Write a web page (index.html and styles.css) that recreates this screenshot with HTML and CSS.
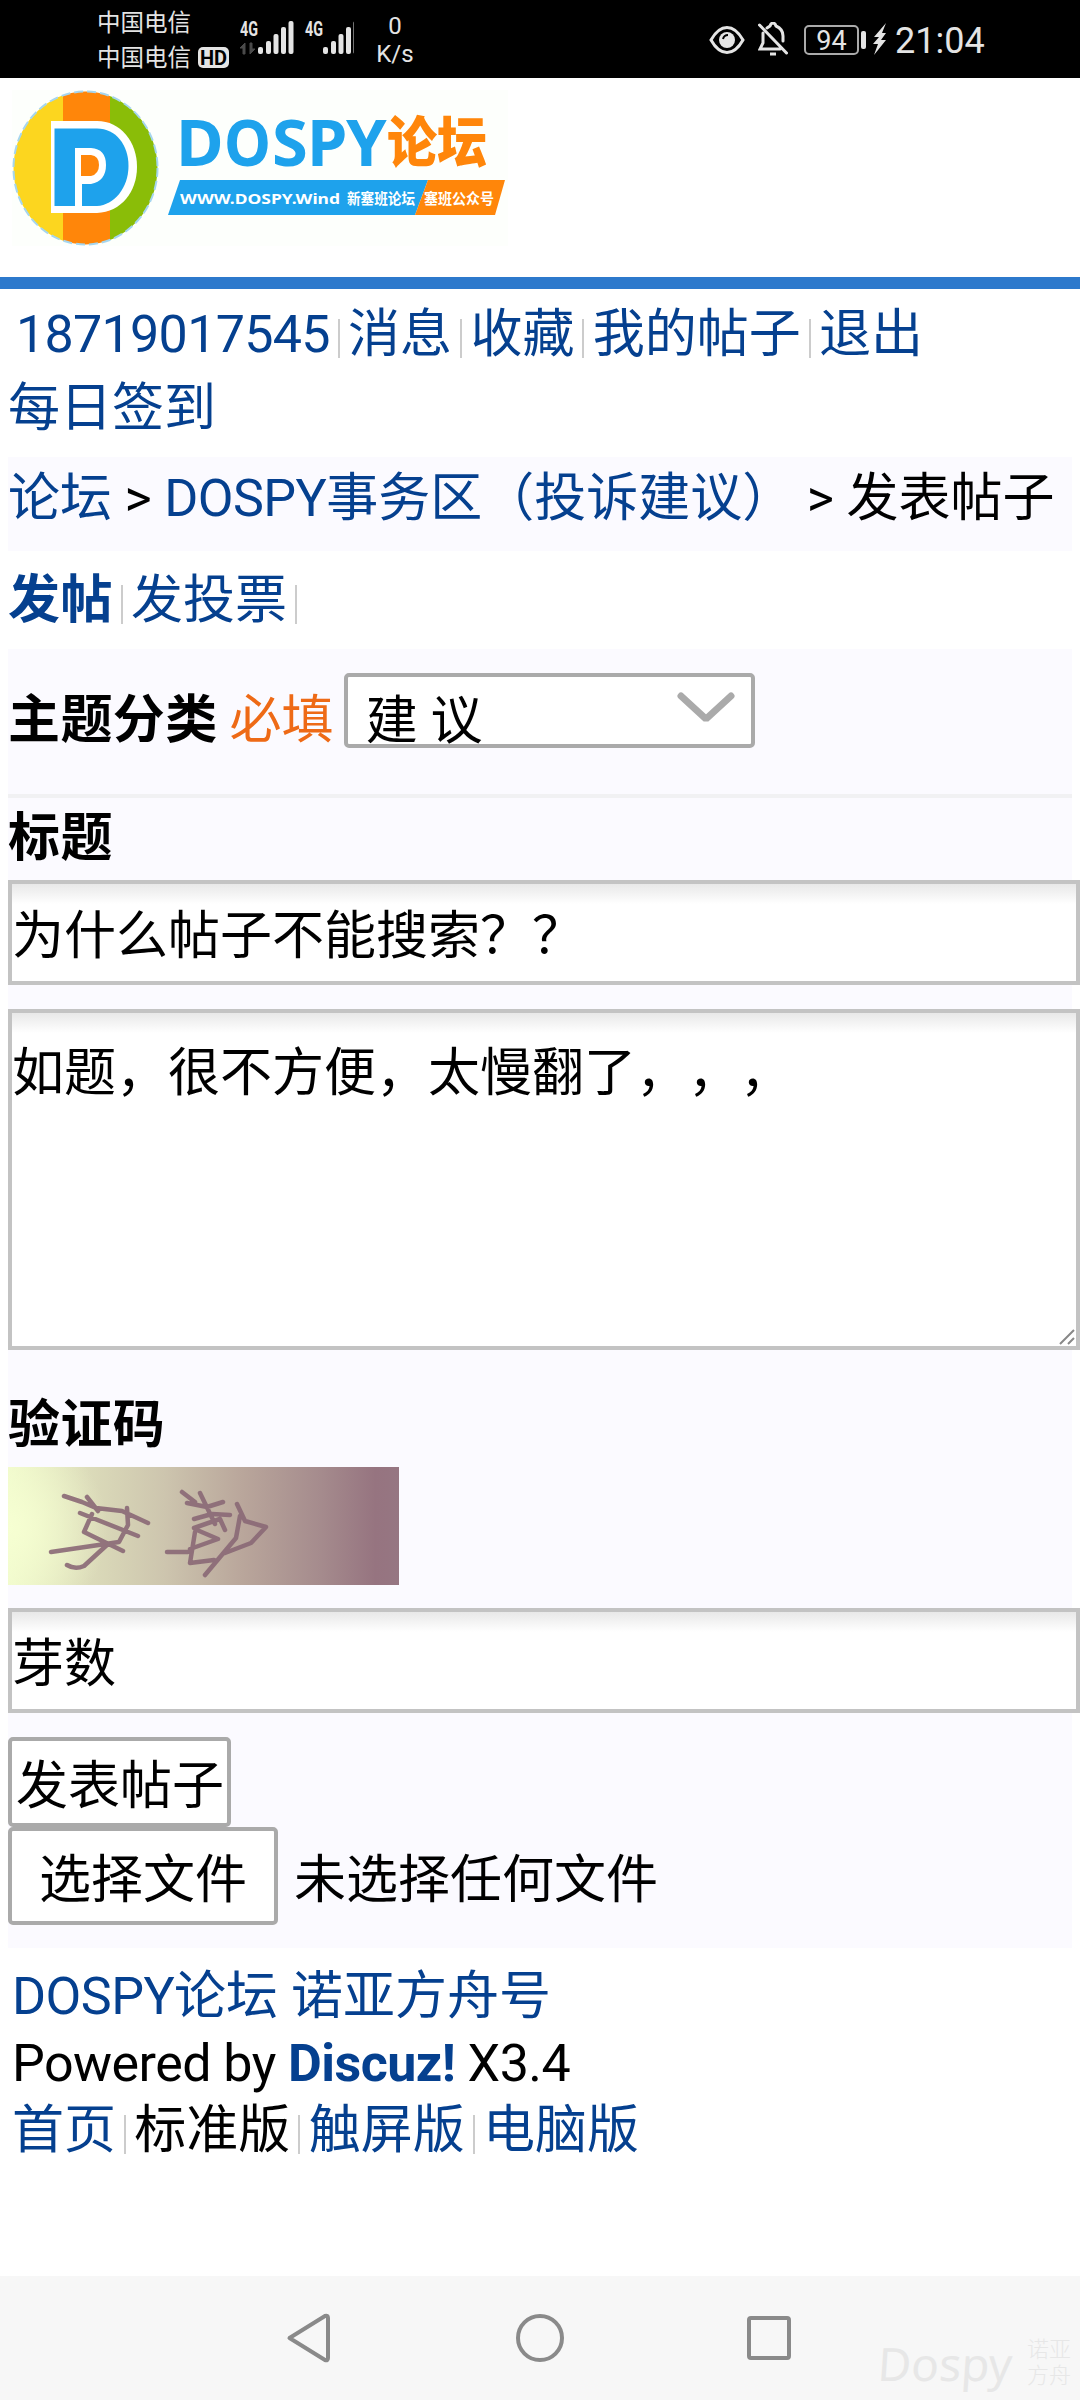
FILE: index.html
```html
<!DOCTYPE html>
<html lang="zh-CN">
<head>
<meta charset="utf-8">
<title>发表帖子 - DOSPY论坛</title>
<link rel="stylesheet" href="styles.css">
</head>
<body>
<header class="status">
  <div class="carriers"><div>中国电信</div><div class="carrier-row">中国电信<span class="hd">HD</span></div></div>
  <svg class="signal" width="114" height="56" viewBox="0 -8 114 56">
    <g fill="#e4e4e4">
      <text class="net" x="0" y="17" textLength="18" lengthAdjust="spacingAndGlyphs">4G</text>
      <text class="net" x="65" y="17" textLength="18" lengthAdjust="spacingAndGlyphs">4G</text>
      <g id="bars"><rect x="18" y="28" width="5" height="7" rx="2"/><rect x="26" y="22" width="5" height="13" rx="2"/><rect x="33.500" y="15" width="5" height="20" rx="2"/><rect x="41" y="8" width="5" height="27" rx="2"/><rect x="48.500" y="2" width="5" height="33" rx="2"/></g>
      <use href="#bars" x="65"/>
    </g>
    <path d="M0 29l5-5v11h-2v-6zM15 30l-5 5v-11h2v6z" fill="#4a4a4a" stroke="#4a4a4a"/>
  </svg>
  <div class="speed"><div>0</div><div>K/s</div></div>
  <svg class="eye" width="36" height="30" viewBox="0 0 36 30"><path d="M2 15Q9 2.500 18 2.500T34 15Q27 27.500 18 27.500T2 15Z" fill="none" stroke="#e4e4e4" stroke-width="3"/><circle cx="18" cy="15" r="8" fill="#e4e4e4"/><path d="M14 14q1-4 5-4" stroke="#000" stroke-width="2" fill="none"/></svg>
  <svg class="bell" width="30" height="34" viewBox="0 0 30 34" fill="none" stroke="#e4e4e4" stroke-width="3"><path d="M1.500 3L28.500 31M5 11v10l-3 6h20M9 6l3-2q1-3 3-3t3 3q7 3 7 10v5" stroke-linecap="round"/><path d="M12 32h6"/></svg>
  <span class="battery">94</span><i class="tip"></i>
  <svg class="bolt" width="14" height="32" viewBox="0 0 14 32"><path d="M13 0L1 14h5L0 21h5L1 32L13 17H8L13 10H9Z" fill="#e4e4e4"/></svg>
  <span class="clock">21:04</span>
</header>

<div class="brand">
  <svg width="496" height="156" viewBox="12 90 496 156">
    <rect x="12" y="90" width="496" height="156" fill="#fdfffc"/>
    <clipPath id="disc"><ellipse cx="85.500" cy="168" rx="72" ry="76.500"/></clipPath>
    <g clip-path="url(#disc)"><rect x="12" y="90" width="51" height="156" fill="#fcd61f"/><rect x="63" y="90" width="47" height="156" fill="#ff860a"/><rect x="110" y="90" width="50" height="156" fill="#8abd08"/></g>
    <ellipse cx="85.500" cy="168" rx="72" ry="76.500" fill="none" stroke="#a6d6ef" stroke-width="2" stroke-dasharray="9 4"/>
    <path d="M51 121H97C121 121 137 142 137 167C137 192 121 212 97 213H51Z" fill="#fff"/>
    <path d="M54.500 128.500H97C116 128.500 128.500 145 128.500 166C128.500 188 114 205 97 206H54.500Z" fill="#1ea2ec"/>
    <path d="M75 213V148H91Q106 149 106 165T91 184H82V213Z" fill="#fff"/>
    <path d="M81 155H91Q99 156 99 165T91 176H81Z" fill="#ff860a"/>
    <g class="logo-latin"><text x="176" y="166">D</text><text x="224" y="166" textLength="47" lengthAdjust="spacingAndGlyphs">O</text><text x="272" y="166">S</text><text x="307" y="166">P</text><text x="346" y="166">Y</text></g>
    <text class="logo-cjk" x="387" y="162" textLength="100" lengthAdjust="spacingAndGlyphs">论坛</text>
    <path d="M180 180H428L415 215H168Z" fill="#1ea2ec"/><path d="M428 180H505L495 215H415Z" fill="#ff860a"/>
    <text class="logo-sub" x="180" y="204" textLength="160" lengthAdjust="spacingAndGlyphs">WWW.DOSPY.Wind</text>
    <text class="logo-sub" x="347" y="204" textLength="68" lengthAdjust="spacingAndGlyphs">新塞班论坛</text>
    <text class="logo-sub" x="424" y="204" textLength="70" lengthAdjust="spacingAndGlyphs">塞班公众号</text>
  </svg>
</div>

<nav class="user"><a class="uid">18719017545</a><i class="pipe"></i><a>消息</a><i class="pipe"></i><a>收藏</a><i class="pipe"></i><a>我的帖子</a><i class="pipe"></i><a>退出</a><br><a>每日签到</a></nav>
<div class="crumb"><a>论坛</a> &gt; <a><span class="latin">DOSPY</span>事务区（投诉建议）</a> &gt; 发表帖子</div>
<div class="tabs"><a><b>发帖</b></a><i class="pipe"></i><a>发投票</a><i class="pipe"></i></div>

<form class="post">
  <div class="category"><b>主题分类</b><span class="required">必填</span>
    <div class="select"><span>建 议</span><svg width="58" height="34" viewBox="0 0 58 34"><path d="M4 4L29 27L54 4" fill="none" stroke="#aaa" stroke-width="7" stroke-linecap="round" stroke-linejoin="bevel"/></svg></div>
  </div>
  <label class="title">标题</label>
  <input class="field" value="为什么帖子不能搜索？？">
  <div class="area"><textarea>如题，很不方便，太慢翻了，，，</textarea><svg class="grip" width="16" height="16" viewBox="0 0 16 16"><path d="M1 15L15 1M9 15L15 9" stroke="#888" stroke-width="2"/></svg></div>
  <label class="verify">验证码</label>
  <svg class="captcha" width="391" height="118" viewBox="8 1467 391 118">
    <defs><linearGradient id="wash"><stop offset="0" stop-color="#eff9cb"/><stop offset=".2" stop-color="#dcdcba"/><stop offset=".4" stop-color="#cdc5ae"/><stop offset=".6" stop-color="#b9a69b"/><stop offset=".8" stop-color="#a58b8d"/><stop offset=".94" stop-color="#967480"/><stop offset="1" stop-color="#967682"/></linearGradient>
    <radialGradient id="glow" gradientUnits="userSpaceOnUse" cx="8" cy="1528" r="100"><stop offset="0" stop-color="#f6ffd2"/><stop offset="1" stop-color="#f6ffd2" stop-opacity="0"/></radialGradient></defs>
    <rect x="8" y="1467" width="391" height="118" fill="url(#wash)"/><rect x="8" y="1467" width="391" height="118" fill="url(#glow)"/>
    <g fill="none" stroke="#8a6876" stroke-opacity=".9" stroke-width="4.500" stroke-linejoin="round" stroke-linecap="round">
      <path d="M64 1496L82 1502L96 1508L122 1511L148 1523M87 1497L98 1511M80 1513L138 1536M92 1514L84 1532L123 1551M127 1508L128 1525L119 1542L51 1552M108 1544L84 1566Q75 1570 67 1565"/>
      <path d="M182 1492L195 1502M200 1493L215 1524M187 1503L207 1507L223 1502M194 1519L212 1514L230 1515M194 1528L220 1519L225 1530M237 1504L245 1521L266 1527L251 1543L225 1553M240 1516L236 1538L205 1575M197 1530L218 1539L190 1549M195 1532L190 1563L214 1560M167 1552H188"/>
    </g>
  </svg>
  <input class="field code" value="芽数">
  <button class="submit" type="button">发表帖子</button>
  <div class="file"><button class="choose" type="button">选择文件</button><span>未选择任何文件</span></div>
</form>

<footer class="foot">
  <div><a><span class="latin">DOSPY</span>论坛</a> <a>诺亚方舟号</a></div>
  <div class="latin">Powered by <a><b>Discuz!</b></a> X3.4</div>
  <div><a>首页</a><i class="pipe"></i>标准版<i class="pipe"></i><a>触屏版</a><i class="pipe"></i><a>电脑版</a></div>
</footer>

<div class="keys">
  <svg width="1080" height="124" viewBox="0 2276 1080 124" fill="none" stroke="#8a8a8a" stroke-width="4" stroke-linejoin="round">
    <path d="M289.500 2338L325 2316Q328 2315 328 2318V2358Q328 2361 325 2360Z"/><circle cx="540" cy="2338" r="22"/><rect x="749" y="2318" width="40" height="40" rx="2"/>
  </svg>
  <div class="mark"><em>Dospy</em><span>诺亚<br>方舟</span></div>
</div>
</body>
</html>
```
FILE: styles.css
```css
* { box-sizing: border-box; }
body { margin: 0; width: 1080px; height: 2400px; display: flex; flex-direction: column; overflow: hidden; background: #fff; color: #000; font: 52px/74px Roboto, "Noto Sans CJK SC", sans-serif; text-spacing-trim: space-all; font-feature-settings: "chws" 0, "halt" 0; }
a { color: #05408f; text-decoration: none; }
svg { display: block; flex: none; }
input, textarea, button { font: inherit; color: inherit; margin: 0; outline: none; border-radius: 0; appearance: none; text-spacing-trim: space-all; font-feature-settings: inherit; }

.status { height: 78px; flex: none; display: flex; align-items: center; background: #000; color: #e4e4e4; padding-left: 97px; }
.carriers { width: 143px; padding-top: 3px; font-size: 23.5px; line-height: 34.500px; }
.carrier-row { display: flex; align-items: center; gap: 7px; white-space: nowrap; }
.hd { width: 31px; height: 21px; border-radius: 5px; background: #e4e4e4; color: #000; font: bold 20px/22px Roboto, sans-serif; text-align: center; }
.net { font: bold 20px Roboto, sans-serif; }
.speed { width: 40px; margin: 2px 0 0 21px; font-size: 24px; line-height: 28px; text-align: center; }
.eye { margin-left: 294px; margin-top: 2px; }
.bell { margin-left: 13px; }
.battery { width: 55px; height: 30px; margin: 2px 0 0 16px; border: 2px solid #aaa; border-radius: 5px; font-size: 27px; line-height: 28px; text-align: center; }
.tip { width: 5px; height: 18px; margin: 2px 7px 0 2px; border-radius: 2px; background: #e4e4e4; }
.clock { margin-left: 8px; font-size: 36px; line-height: 74px; padding-top: 3px; }

.brand { height: 211px; flex: none; padding: 12px; border-bottom: 12px solid #2d79cc; }
.logo-latin { font: bold 65px "Noto Sans", sans-serif; fill: #1ea2ec; }
.logo-cjk { font: 900 55px "Noto Sans CJK SC", sans-serif; fill: #ff860a; }
.logo-sub { font: bold 15px "Noto Sans", "Noto Sans CJK SC", sans-serif; fill: #fff; }

.latin { letter-spacing: -.55px; }
b, .title, .verify { letter-spacing: .4px; }
.latin b { letter-spacing: -.55px; }
.pipe { display: inline-block; width: 2px; height: 39px; margin: 0 8.3px 0 8px; background: #ccc; vertical-align: -6px; }
.user { height: 168px; flex: none; padding: 9px 8px 0; }
.uid { padding-left: 8px; letter-spacing: -.7px; }
.crumb { height: 94px; flex: none; margin: 0 8px; background: #fbfaff; line-height: 84px; white-space: nowrap; word-spacing: -.4px; }
.tabs { height: 98px; flex: none; padding-left: 8px; line-height: 100px; }

.post { height: 1299px; flex: none; margin: 0 8px; background: #fbfaff; display: flex; flex-direction: column; align-items: flex-start; }
.category { width: 100%; height: 149px; display: flex; align-items: flex-start; border-bottom: 4px solid #f1f1f3; line-height: 144px; }
.required { margin: 0 10px 0 12px; color: #ee6a16; }
.select { width: 411px; height: 75px; margin-top: 24px; padding: 0 16px 0 18px; display: flex; justify-content: space-between; border: 4px solid #aaa; border-radius: 5px; background: #fff; line-height: 89px; }
.select svg { margin-top: 15px; }
.title { height: 82px; line-height: 82px; font-weight: bold; }
.field { width: 1072px; height: 105px; padding: 0 1px 2px 0; border: 4px solid #c3c3c3; background: linear-gradient(#e8e8e8, #fff 20px); }
.area { position: relative; width: 1072px; height: 341px; margin-top: 24px; }
.area textarea { display: block; width: 100%; height: 100%; padding: 30px 1px 0 0; border: 4px solid #c3c3c3; background: linear-gradient(#e8e8e8, #fff 20px); line-height: 61px; resize: none; overflow: hidden; }
.grip { position: absolute; right: 5px; bottom: 5px; }
.verify { height: 117px; padding-top: 35px; line-height: 82px; font-weight: bold; }
.code { margin-top: 23px; }
.submit { width: 223px; height: 90px; margin-top: 24px; padding: 7px 0 0 1px; border: 4px solid #aaa; border-radius: 5px; background: #fff; line-height: 77px; }
.file { display: flex; line-height: 107px; white-space: nowrap; }
.choose { width: 270px; height: 98px; margin-right: 16px; padding: 7px 0 0; border: 4px solid #aaa; border-radius: 5px; background: #fff; line-height: 85px; }

.foot { height: 328px; flex: none; padding: 16px 12px 0; line-height: 66.800px; }
.keys { position: relative; height: 124px; flex: none; background: #f7f7f7; }
.mark { position: absolute; left: 878px; top: 59px; display: flex; align-items: center; gap: 8px; color: #e7e7e7; }
.mark em { width: 141px; font: normal 46px/56px "Noto Sans", sans-serif; transform: skewX(-4deg); }
.mark span { font-size: 22px; line-height: 26px; font-weight: 300; }
```
